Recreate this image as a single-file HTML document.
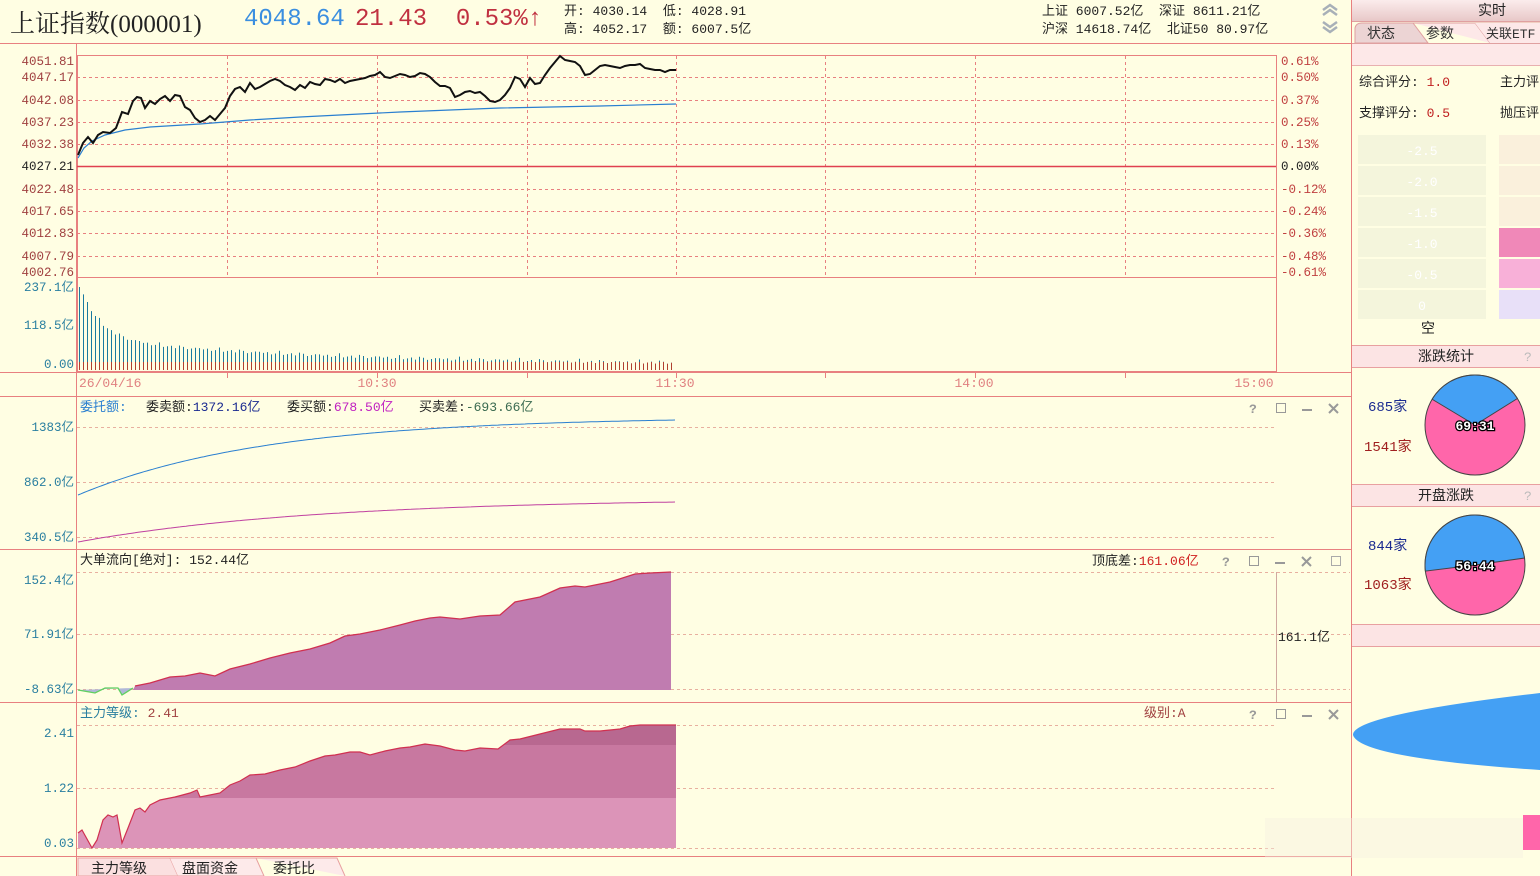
<!DOCTYPE html>
<html><head><meta charset="utf-8">
<style>
*{margin:0;padding:0;box-sizing:border-box}
body{width:1540px;height:876px;overflow:hidden;background:#fffee3;font-family:"Liberation Mono","Noto Sans CJK SC",monospace;position:relative}
.a{position:absolute;white-space:nowrap}
svg{position:absolute;left:0;top:0}
</style></head><body>
<svg id="s" width="1540" height="876" xmlns="http://www.w3.org/2000/svg" font-family="Liberation Mono, Noto Sans CJK SC, monospace">
</svg>
<div class="a" style="left:10px;top:4px;font-size:25px;color:#222;font-family:'Liberation Serif','Noto Serif CJK SC',serif">上证指数(000001)</div>
<div class="a" style="left:244px;top:6px;font-size:24px;color:#3a8ee0">4048.64</div>
<div class="a" style="left:355px;top:6px;font-size:24px;color:#c03040">21.43&nbsp; 0.53%&#8593;</div>
<div class="a" style="left:564px;top:3px;font-size:13px;color:#222;line-height:18px">开: 4030.14&nbsp; 低: 4028.91<br>高: 4052.17&nbsp; 额: 6007.5亿</div>
<div class="a" style="left:1042px;top:3px;font-size:13px;color:#222;line-height:18px">上证 6007.52亿&nbsp; 深证 8611.21亿<br>沪深 14618.74亿&nbsp; 北证50 80.97亿</div>
<div class="a" style="left:1359px;top:71px;font-size:13px;color:#222">综合评分: <span style="color:#c02020">1.0</span></div>
<div class="a" style="left:1359px;top:102px;font-size:13px;color:#222">支撑评分: <span style="color:#c02020">0.5</span></div>
<div class="a" style="left:1500px;top:71px;font-size:13px;color:#222">主力评</div>
<div class="a" style="left:1500px;top:102px;font-size:13px;color:#222">抛压评</div>
<script>
const s=document.getElementById('s');let h='';
const R='#e88080';
function L(x1,y1,x2,y2,c,w,d){h+=`<line x1="${x1}" y1="${y1}" x2="${x2}" y2="${y2}" stroke="${c}" stroke-width="${w||1}" ${d?'stroke-dasharray="'+d+'"':''}/>`}
function T(x,y,t,c,sz,an){h+=`<text x="${x}" y="${y}" fill="${c}" font-size="${sz||13}" ${an?'text-anchor="'+an+'"':''}>${t}</text>`}
function R_(x,y,w,hh,f,st){h+=`<rect x="${x}" y="${y}" width="${w}" height="${hh}" fill="${f}" ${st?'stroke="'+st+'"':''}/>`}
function P(pts){return pts.map((p,i)=>(i?'L':'M')+p[0]+' '+p[1]).join(' ')}
L(0,43.5,1351,43.5,R);
h+='<path d="M1323 10 L1330 5 L1337 10 M1323 15 L1330 10 L1337 15" stroke="#a8b0b8" stroke-width="2.5" fill="none"/>';
h+='<path d="M1323 22 L1330 27 L1337 22 M1323 27 L1330 32 L1337 27" stroke="#a8b0b8" stroke-width="2.5" fill="none"/>';
h+=`<rect x="77.5" y="55.5" width="1199" height="316" fill="none" stroke="${R}"/>`;
L(77,277.5,1276,277.5,R);
L(76.5,43,76.5,876,R);
L(0,372.5,1351,372.5,R);L(0,396.5,1351,396.5,R);L(0,549.5,1351,549.5,R);L(0,702.5,1351,702.5,R);L(0,856.5,1351,856.5,R);
L(1351.5,0,1351.5,876,R);
const vx=[227,377,527,676,825,975,1125];
vx.forEach(x=>{L(x+.5,56,x+.5,277,R,1,'3 3');L(x+.5,373,x+.5,378,R)});
const py=[[61,'4051.81','0.61%'],[77,'4047.17','0.50%'],[100,'4042.08','0.37%'],[122,'4037.23','0.25%'],[144,'4032.38','0.13%'],[166,'4027.21','0.00%'],[189,'4022.48','-0.12%'],[211,'4017.65','-0.24%'],[233,'4012.83','-0.36%'],[256,'4007.79','-0.48%'],[272,'4002.76','-0.61%']];
py.forEach(([y,a,b],i)=>{if(i>0&&i<10&&i!=5)L(77,y+.5,1276,y+.5,R,1,'3 3');T(74,y+4,a,i==5?'#222':'#a04040',12.5,'end');T(1281,y+4,b,i==5?'#222':'#c04040',12.5)});
L(77,166.5,1276,166.5,'#e04050',1.5);
const pp=[[78,155],[83,143],[88,137],[93,143],[98,135],[103,132],[110,133],[116,128],[122,112],[128,114],[133,101],[137,97],[141,98],[145,108],[150,101],[155,104],[160,99],[165,96],[170,101],[175,95],[180,96],[185,107],[190,110],[195,118],[200,122],[205,120],[210,116],[215,120],[220,114],[225,108],[230,96],[235,89],[240,87],[245,92],[250,83],[255,89],[260,87],[265,84],[270,81],[275,79],[280,81],[285,85],[290,87],[295,90],[300,85],[305,88],[310,82],[315,84],[320,85],[325,79],[330,80],[335,82],[340,79],[345,83],[350,81],[355,80],[360,79],[365,78],[370,76],[375,75],[380,72],[385,77],[390,78],[395,76],[400,74],[405,75],[410,77],[415,76],[420,73],[425,74],[430,77],[435,82],[440,86],[445,86],[450,88],[455,97],[460,95],[465,92],[470,91],[475,93],[480,92],[485,96],[490,101],[495,102],[500,100],[505,95],[510,88],[515,77],[520,79],[525,87],[530,78],[535,84],[540,83],[545,75],[550,68],[555,62],[560,56],[565,60],[570,61],[575,62],[580,66],[585,75],[590,74],[595,70],[600,66],[605,65],[610,66],[615,67],[620,68],[625,66],[630,65],[635,65],[640,64],[645,68],[650,69],[655,70],[660,70],[665,72],[670,70],[676,70]];
h+=`<path d="${P([[78,158],[84,148],[92,141],[105,135],[125,130],[150,127],[200,124],[250,120],[300,117],[400,112],[500,108],[600,106],[676,104]])}" stroke="#2a7fd0" fill="none" stroke-width="1.2"/>`;
h+=`<path d="${P(pp)}" stroke="#111" fill="none" stroke-width="2"/>`;
T(74,291,'237.1亿','#2a7fa0',12.5,'end');T(74,329,'118.5亿','#2a7fa0',12.5,'end');T(74,368,'0.00','#2a7fa0',12.5,'end');
for(let x=79,i=0;x<=672;x+=4,i++){let v=4+55*Math.exp(-i/5)+26*Math.exp(-i/60)+(i%5==0?2:0)+((i*7)%3);let top=370-Math.min(v,83);L(x+.5,top,x+.5,370,'#1a7aa0',1);L(x+.5,Math.max(top,362),x+.5,370,'#b04030',1)}
T(79,387,'26/04/16','#e08080',13);T(377,387,'10:30','#e08080',13,'middle');T(675,387,'11:30','#e08080',13,'middle');T(974,387,'14:00','#e08080',13,'middle');T(1254,387,'15:00','#e08080',13,'middle');
function icons(x,y,extra){h+=`<text x="${x}" y="${y+5}" fill="#999" font-size="13" font-weight="bold">?</text>`;R_(x+27.5,y-4.5,9,9,'none','#999');L(x+53,y+2,x+63,y+2,'#999',2);h+=`<path d="M${x+80} ${y-4} L${x+89} ${y+5} M${x+89} ${y-4} L${x+80} ${y+5}" stroke="#999" stroke-width="2"/>`;if(extra)h+=`<rect x="${x+109.5}" y="${y-4.5}" width="9" height="9" fill="none" stroke="#aaa"/>`}
T(80,411,'委托额:','#2a7fd0',13);T(146,411,'委卖额:<tspan fill="#1a2a90">1372.16亿</tspan>','#222',13);T(287,411,'委买额:<tspan fill="#c020c0">678.50亿</tspan>','#222',13);T(419,411,'买卖差:<tspan fill="#3a6a50">-693.66亿</tspan>','#222',13);
icons(1249,408);
[427,482,537].forEach(y=>L(77,y+.5,1276,y+.5,'#e8b0a0',1,'3 3'));
T(74,431,'1383亿','#2a7fa0',12.5,'end');T(74,486,'862.0亿','#2a7fa0',12.5,'end');T(74,541,'340.5亿','#2a7fa0',12.5,'end');
let b=[],m=[];for(let x=78;x<=676;x+=3){let t=(x-78)/598;b.push([x,(495-75*(1-Math.exp(-t*3.2))/(1-Math.exp(-3.2))).toFixed(1)]);m.push([x,(542-40*(1-Math.exp(-t*2.5))/(1-Math.exp(-2.5))).toFixed(1)])}
h+=`<path d="${P(b)}" stroke="#2a7fd0" fill="none"/><path d="${P(m)}" stroke="#c040a0" fill="none"/>`;
T(80,564,'大单流向[绝对]: 152.44亿','#222',13);T(1092,565,'顶底差:<tspan fill="#d02020">161.06亿</tspan>','#222',13);
icons(1222,561,1);
[572,634,689].forEach(y=>L(77,y+.5,1350,y+.5,'#e8b0a0',1,'3 3'));
L(1276.5,572,1276.5,702,'#d0a8a0');T(1278,641,'161.1亿','#222',13);
T(74,584,'152.4亿','#2a7fa0',12.5,'end');T(74,638,'71.91亿','#2a7fa0',12.5,'end');T(74,693,'-8.63亿','#2a7fa0',12.5,'end');
const a3=[[122,688],[135,686],[150,683],[170,677],[185,676],[200,673],[215,676],[230,669],[250,664],[270,658],[290,653],[310,649],[330,643],[345,636],[360,634],[380,630],[400,625],[415,621],[430,618],[440,617],[460,619],[480,616],[500,615],[515,602],[540,597],[560,588],[575,586],[585,587],[595,585],[610,582],[635,574],[650,573],[671,572]];
h+=`<path d="${P([[133,690]].concat(a3.slice(1)).concat([[671,690]]))}Z" fill="#c07cb0"/>`;
h+=`<path d="${P(a3.slice(1))}" stroke="#d03050" fill="none" stroke-width="1.3"/>`;
h+=`<path d="M78 690 L95 693 L105 688 L118 688 L122 695 L133 688" stroke="#60d060" fill="#b0b8d8" stroke-width="1.3"/>`;
T(80,717,'主力等级: <tspan fill="#a04040">2.41</tspan>','#2a7fa0',13);T(1144,717,'级别:A','#a04040',13);
icons(1249,714);
[725,788,848].forEach(y=>L(77,y+.5,1276,y+.5,'#e8b0a0',1,'3 3'));
T(74,737,'2.41','#2a7fa0',12.5,'end');T(74,792,'1.22','#2a7fa0',12.5,'end');T(74,847,'0.03','#2a7fa0',12.5,'end');
const a4=[[78,833],[82,830],[92,848],[97,840],[103,820],[108,815],[113,817],[117,815],[122,843],[128,828],[135,810],[140,808],[145,812],[150,805],[160,800],[175,797],[190,793],[197,790],[200,797],[210,795],[220,793],[230,785],[240,781],[250,775],[265,774],[280,770],[295,767],[310,761],[325,756],[335,755],[350,752],[360,752],[370,755],[385,751],[400,748],[410,747],[425,744],[440,746],[455,750],[465,751],[480,748],[498,749],[510,740],[520,739],[540,734],[560,729],[580,729],[585,731],[600,731],[620,729],[630,726],[640,725],[676,725]];
const area=P([[78,848]].concat(a4).concat([[676,848]]))+'Z';
h+=`<clipPath id="c4"><path d="${area}"/></clipPath><g clip-path="url(#c4)"><rect x="78" y="798" width="600" height="51" fill="#dc94b8"/><rect x="78" y="745" width="600" height="53" fill="#c878a0"/><rect x="78" y="700" width="600" height="45" fill="#b86890"/></g>`;
h+=`<path d="${P(a4)}" stroke="#d03050" fill="none" stroke-width="1.2"/>`;
h+=`<path d="M78 876 L78 858 L170 858 L178 876Z" fill="#fbe0e0" stroke="#e8a0a0"/><path d="M170 858 L256 858 L264 876 L178 876" fill="#fdeaea" stroke="#e8a0a0"/><path d="M256 858 L337 858 L345 876" fill="#fdeaea" stroke="#e8a0a0"/>`;
T(91,873,'主力等级','#222',14);T(182,873,'盘面资金','#222',14);T(273,873,'委托比','#222',14);
h+=`<defs><linearGradient id="g1" x1="0" y1="0" x2="0" y2="1"><stop offset="0" stop-color="#fbecec"/><stop offset="1" stop-color="#e8c8c8"/></linearGradient></defs>`;
R_(1352,0,188,21,'url(#g1)');L(1352,21.5,1540,21.5,'#e0a0a0');
T(1492,15,'实时','#222',14,'middle');
h+=`<path d="M1355 43 L1355 28 Q1356 23 1362 23 L1413 23 L1428 43Z" fill="#ecd4d4" stroke="#e0a0a0"/><path d="M1413 23 L1475 23 L1490 43" fill="#fde8e8" stroke="#e0a0a0"/><path d="M1475 23 L1540 23" fill="none" stroke="#e0a0a0"/><path d="M1475 23 L1490 43 L1540 43 L1540 23Z" fill="#fde8e8"/>`;
T(1367,38,'状态','#333',14);T(1426,38,'参数','#333',14);T(1486,38,'关联ETF','#333',13);
R_(1352,43,188,22,'#fde8e8');L(1352,43.5,1540,43.5,'#e0a0a0');L(1352,65.5,1540,65.5,'#e8b0b0');
const rc=['#faf0dc','#faf0dc','#faf0dc','#f088b8','#f8b0d8','#e8e0f8'];['-2.5','-2.0','-1.5','-1.0','-0.5','0'].forEach((t,i)=>{R_(1358,135+i*31,128,29,'#f4f5dc');T(1422,155+i*31,t,'#fff',13,'middle');R_(1499,135+i*31,41,29,rc[i])});
T(1428,333,'空','#222',14,'middle');
function sec(y,t){R_(1352,y,188,22,'#fce4e4');L(1352,y+.5,1540,y+.5,'#e8a0a0');L(1352,y+22.5,1540,y+22.5,'#e8a0a0');if(t){T(1446,y+16,t,'#222',14,'middle');T(1524,y+16,'?','#bbb',13,'start')}}
sec(345,'涨跌统计');sec(484,'开盘涨跌');sec(624,'');
function pie(cx,cy,r,a1,a2,lbl){const p=a=>[cx+r*Math.cos(a*Math.PI/180),cy+r*Math.sin(a*Math.PI/180)];h+=`<circle cx="${cx}" cy="${cy}" r="${r}" fill="#ff66aa" stroke="#444"/>`;const [x1,y1]=p(a1),[x2,y2]=p(a2);h+=`<path d="M${cx} ${cy} L${x1} ${y1} A${r} ${r} 0 0 1 ${x2} ${y2}Z" fill="#44a0f4" stroke="#444"/>`;h+=`<text x="${cx}" y="${cy+5}" fill="#fff" stroke="#000" stroke-width="2.5" paint-order="stroke" font-size="13" font-weight="bold" text-anchor="middle">${lbl}</text>`}
pie(1475,425,50,-149,-32,'69:31');pie(1475,565,50,173,-8,'56:44');
T(1368,411,'685家','#1a2a90',14);T(1364,451,'1541家','#a02020',14);T(1368,550,'844家','#1a2a90',14);T(1364,589,'1063家','#a02020',14);
h+=`<path d="M1540 693 Q1352 715 1353 735 Q1360 758 1540 770Z" fill="#44a0f4"/>`;
R_(1523,815,17,35,'#ff66aa');
R_(1265,818,258,40,'rgba(245,240,225,0.4)');
s.innerHTML=h;
</script>
</body></html>
